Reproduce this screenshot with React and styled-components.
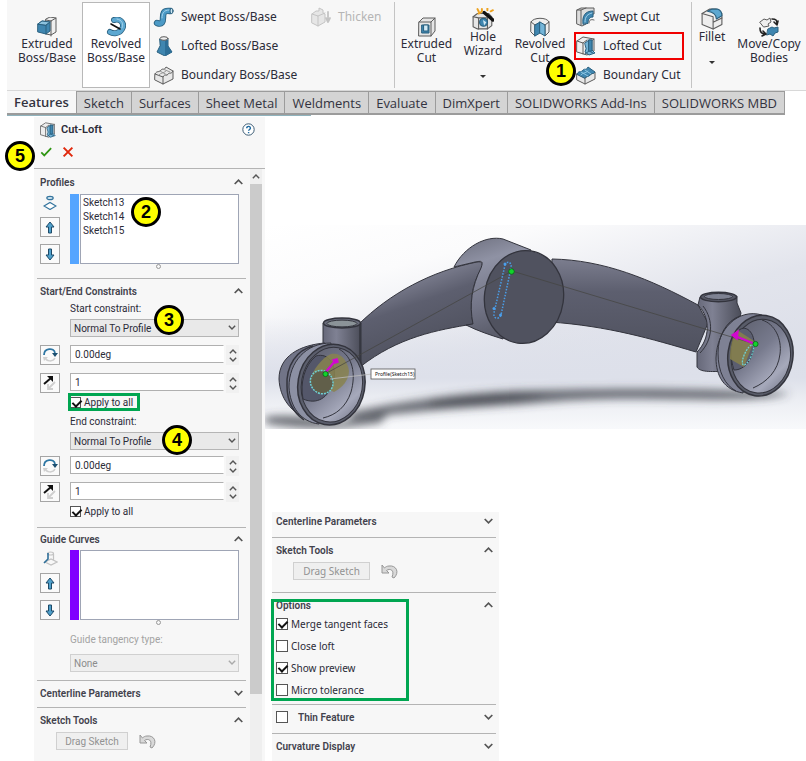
import React, { useId } from 'react';
import styled, { createGlobalStyle } from 'styled-components';

const theme = {
  ink: '#2b2b38',
  grey: '#a3a3a3',
  panel: '#f7f7f7',
  line: '#b4b4b4',
  blue: '#3f86b0',
  darkBlue: '#2a607f',
  green: '#00a651',
  danger: '#f00000',
};

const GlobalStyle = createGlobalStyle`
  * {
    box-sizing: border-box;
  }
  body {
    margin: 0;
    background: #fff;
    color: ${theme.ink};
    font-family: 'Noto Sans', 'Open Sans', sans-serif;
    font-size: 12px;
  }
  button, input, select {
    font: inherit;
    color: inherit;
  }
  h2, h3, ul {
    margin: 0;
    padding: 0;
  }
`;

const Page = styled.div`
  display: flex;
  flex-direction: column;
  min-height: 100vh;
`;

/* ---------- ribbon ---------- */

const Ribbon = styled.header`
  margin-left: 7px;
  &::after {
    content: '';
    display: block;
    width: 38%;
    height: 1px;
    background: #8fb3bd;
  }
`;
const Tools = styled.div`
  display: flex;
  height: 91px;
  padding: 2px 0 2px 5px;
  background: ${theme.panel};
  border-bottom: 1px solid #d8d8d8;
`;
const BigTool = styled.button`
  flex: none;
  width: ${({ $width }) => $width}px;
  display: flex;
  flex-direction: column;
  align-items: center;
  padding: ${({ $menu }) => ($menu ? 5 : 14)}px 0 0;
  border: 1px solid ${({ $active }) => ($active ? '#b8b8b8' : 'transparent')};
  background: ${({ $active }) => ($active ? '#fff' : 'none')};
  line-height: 14px;
  white-space: pre;
`;
const MenuArrow = styled.span`
  margin-top: 17px;
  border: 3px solid transparent;
  border-top-color: #333;
`;
const ToolColumn = styled.div`
  flex: none;
  display: flex;
  flex-direction: column;
  width: ${({ $width }) => $width}px;
  padding-left: 3px;
`;
const SmallTool = styled.button`
  flex: none;
  position: relative;
  display: flex;
  align-items: center;
  gap: 6px;
  height: 29px;
  padding: 0;
  border: 0;
  background: none;
  white-space: nowrap;
  svg {
    width: 22px;
  }
  &:disabled {
    color: #b5b5b5;
  }
`;
const ToolDivider = styled.span`
  flex: none;
  width: 1px;
  background: #c4c4c4;
`;
const RedFrame = styled.span`
  position: absolute;
  inset: 1px 7px 0 -1px;
  border: 2px solid ${theme.danger};
`;

const Tabs = styled.nav`
  display: flex;
  height: 24px;
`;
const Tab = styled.button`
  flex: none;
  padding: 0 7px;
  border: 1px solid #9b9b9b;
  border-width: ${({ $active }) => ($active ? '0 1px 2px 0' : '1px 1px 2px 0')};
  background: ${({ $active }) => ($active ? theme.panel : '#d4d4d4')};
  font-family: 'Open Sans', sans-serif;
  font-size: 13px;
  font-weight: ${({ $active }) => ($active ? 600 : 400)};
  color: #333340;
  white-space: nowrap;
`;

/* ---------- badges and frames ---------- */

const Badge = styled.span`
  position: absolute;
  z-index: 2;
  left: ${({ $x }) => $x}px;
  top: ${({ $y }) => $y}px;
  width: 30px;
  height: 30px;
  border: 3px solid #000;
  border-radius: 50%;
  background: #ff0;
  color: #000;
  font: bold 18px/24px 'Liberation Sans', Arial, sans-serif;
  text-align: center;
`;
const GreenFrame = styled.span`
  position: absolute;
  inset: ${({ $inset }) => $inset};
  border: 3px solid ${theme.green};
  pointer-events: none;
`;

/* ---------- property panels ---------- */

const Body = styled.main`
  flex: 1;
  display: flex;
  align-items: stretch;
  padding: 1px 0 0 34px;
`;
const Panel = styled.aside`
  flex: none;
  display: flex;
  flex-direction: column;
  width: 231px;
  background: ${theme.panel};
  font-family: Roboto, 'Noto Sans', sans-serif;
  font-size: 10px;
`;
const PanelHeader = styled.div`
  position: relative;
  height: 52px;
  padding: 4px 10px 0 6px;
  border-bottom: 1px solid ${theme.line};
`;
const PanelTitle = styled.div`
  display: flex;
  align-items: center;
  gap: 5px;
  height: 17px;
  h2 {
    flex: 1;
    font-size: 11px;
    font-weight: 600;
  }
`;
const Actions = styled.div`
  display: flex;
  align-items: center;
  gap: 10px;
  height: 28px;
`;
const IconButton = styled.button`
  display: flex;
  padding: 0;
  border: 0;
  background: none;
`;
const PanelContent = styled.div`
  flex: 1;
  display: flex;
`;
const Sections = styled.div`
  flex: 1;
  min-width: 0;
  padding: 1px 4px 0 3px;
`;
const Scrollbar = styled.div`
  flex: none;
  display: flex;
  flex-direction: column;
  width: 12px;
  margin-right: 3px;
  background: #efefef;
`;
const ScrollArrow = styled(IconButton)`
  height: 15px;
  align-items: center;
  justify-content: center;
`;
const ScrollThumb = styled.span`
  flex: 510;
  background: #cbcbcb;
`;
const ScrollRest = styled.span`
  flex: 67;
`;

const Section = styled.section`
  position: relative;
  padding: 0 3px ${({ $bottom }) => $bottom}px;
  border-bottom: 1px solid ${theme.line};
  &:last-child {
    border-bottom: 0;
  }
`;
const SectionTitle = styled.div`
  display: flex;
  align-items: center;
  height: ${({ $height = 24 }) => $height}px;
  h3 {
    flex: 1;
    font-family: Roboto, 'Noto Sans', sans-serif;
    font-size: 10px;
    font-weight: 600;
    color: #42424c;
  }
`;
const Field = styled.div`
  display: grid;
  grid-template-columns: 20px minmax(0, 1fr);
  column-gap: 10px;
  padding-right: 4px;
`;
const IconStack = styled.div`
  display: flex;
  flex-direction: column;
  align-items: center;
  justify-content: space-between;
`;
const SquareButton = styled.button`
  display: flex;
  align-items: center;
  justify-content: center;
  width: 20px;
  height: 20px;
  padding: 0;
  border: 1px solid #a5a5a5;
  background: #fafafa;
`;
const ListBox = styled.ul`
  height: 70px;
  margin-left: 10px;
  padding: 1px 2px;
  border: 1px solid #9fa5b5;
  box-shadow: -1px 0 0 ${theme.panel}, -10px 0 0 ${({ $color }) => $color};
  background: #fff;
  list-style: none;
  line-height: 14px;
`;
const Splitter = styled.span`
  display: block;
  width: 5px;
  height: 5px;
  margin: 0 auto;
  border: 1px solid #999;
  border-radius: 50%;
  transform: translateX(17px);
`;
const Rows = styled.div`
  display: flex;
  flex-direction: column;
  gap: ${({ $gap }) => $gap}px;
  margin-bottom: 8px;
  &:last-child {
    margin-bottom: 0;
  }
`;
const Indent = styled.div`
  position: relative;
  margin: ${({ $top = 0 }) => $top}px 4px 0 30px;
`;
const FieldLabel = styled.label`
  display: block;
  line-height: 12px;
  margin-bottom: ${({ $muted }) => ($muted ? 8 : 4)}px;
  color: ${({ $muted }) => ($muted ? theme.grey : theme.ink)};
`;
const SelectBox = styled.div`
  position: relative;
  svg {
    position: absolute;
    right: 3px;
    top: 6px;
    pointer-events: none;
  }
`;
const Select = styled.select`
  display: block;
  width: 100%;
  height: 18px;
  padding: 0 3px;
  appearance: none;
  border: 1px solid #b5b5b5;
  border-radius: 0;
  background: #e9e9e9;
  &:disabled {
    color: #8c8c8c;
    border-color: #d0d0d0;
    background: #efefef;
    opacity: 1;
  }
`;
const NumberField = styled.div`
  display: flex;
  gap: 2px;
`;
const NumberInput = styled.input`
  flex: 1;
  min-width: 0;
  height: 18px;
  padding: 0 4px;
  border: 1px solid #b0b0b0;
  border-right-color: #fff;
  border-radius: 0;
  background: #fff;
`;
const Spinner = styled.div`
  display: flex;
  flex-direction: column;
  align-items: center;
  justify-content: center;
  gap: 3px;
  width: 13px;
  height: 20px;
  background: #f1f1f1;
`;
const Check = styled.label`
  position: relative;
  display: flex;
  align-items: center;
  gap: 3px;
  width: fit-content;
  height: ${({ $height = 12 }) => $height}px;
  white-space: nowrap;
`;
const Box = styled.input.attrs({ type: 'checkbox' })`
  position: relative;
  flex: none;
  width: ${({ $size = 11 }) => $size}px;
  height: ${({ $size = 11 }) => $size}px;
  margin: 0;
  appearance: none;
  border: 1px solid #555;
  background: #fff;
  &:checked::after {
    content: '';
    position: absolute;
    left: 3px;
    top: 0;
    width: 4px;
    height: 7px;
    border: solid #111;
    border-width: 0 2px 2px 0;
    transform: rotate(45deg);
  }
`;
const ToolRow = styled.div`
  display: flex;
  align-items: center;
  gap: 11px;
  padding-left: ${({ $left }) => $left}px;
`;
const DragButton = styled.button`
  width: ${({ $width }) => $width}px;
  height: 18px;
  padding: 0;
  border: 1px solid #d0d0d0;
  background: #efefef;
  &:disabled {
    color: #929292;
  }
`;

const Workspace = styled.div`
  flex: 1;
  min-width: 0;
`;
const Viewport = styled.figure`
  margin: 108px 0 83px;
  svg {
    display: block;
    width: 100%;
  }
`;
const LowerPanel = styled.aside`
  width: 227px;
  margin-left: 7px;
  padding-right: 3px;
  background: ${theme.panel};
  font-size: 10px;
  ${Section} {
    padding-left: 4px;
  }
`;
const Checks = styled.div`
  display: flex;
  flex-direction: column;
  gap: 8px;
`;
const ThinFeature = styled(Check)`
  flex: 1;
  gap: 10px;
`;

/* ---------- icons ---------- */

const Icon = ({ size = 20, children }) => (
  <svg
    width={size}
    height={size}
    viewBox="0 0 20 20"
    fill="none"
    stroke="#5c5c5c"
    strokeLinejoin="round"
    strokeLinecap="round"
    aria-hidden="true"
  >
    {children}
  </svg>
);

const ExtrudedBoss = () => (
  <Icon>
    <path d="M9 2l4-2 6 1v14l-5 3-5-1z" fill="#eee" />
    <path d="M14 4l5-3M14 4v15M9 3l5 1" />
    <path d="M1 7l4-3 8 1v9l-4 3-8-2z" fill={theme.blue} stroke={theme.darkBlue} />
    <path d="M1 7l8 1v9M9 8l4-3" stroke={theme.darkBlue} />
    <path d="M1 7l4-3 8 1-4 3z" fill="#8cc2de" stroke={theme.darkBlue} />
  </Icon>
);
const RevolvedBoss = () => (
  <Icon>
    <path d="M8 3c7-2 11 4 8 9-3 5-9 5-12 3" stroke={theme.darkBlue} strokeWidth="6" />
    <path d="M8 3c7-2 11 4 8 9-3 5-9 5-12 3" stroke="#5da8d1" strokeWidth="4.400" />
    <path d="M11 2c5 1 7 5 5 9" stroke="#a5d3eb" />
    <path d="M5 7l9 5" stroke="#111" strokeWidth="1.600" />
  </Icon>
);
const SweptBoss = () => (
  <Icon>
    <path d="M3 16c5 2 6-1 6-5s0-8 7-7" stroke={theme.darkBlue} strokeWidth="6.400" />
    <path d="M3 16c5 2 6-1 6-5s0-8 7-7" stroke="#4c9ac6" strokeWidth="4.600" />
    <path d="M8 11c0-5 2-8 7-8" stroke="#a5d3eb" />
    <ellipse cx="17.500" cy="4" rx="1.500" ry="2.600" fill="#cde6f3" stroke={theme.darkBlue} />
  </Icon>
);
const LoftedBoss = () => (
  <Icon>
    <path d="M6 3h8v7l4 6-7 4-8-4 3-6z" fill={theme.blue} stroke={theme.darkBlue} />
    <path d="M11 4v16l7-4-4-6V3z" fill="#2d6f98" stroke="none" />
    <ellipse cx="10" cy="2.500" rx="4" ry="1.800" fill="#eee" />
  </Icon>
);
const BoundaryBoss = () => (
  <Icon>
    <path d="M1 9c2-4 4-1 6-4 2-2 3 1 5-3l7 4v8l-10 5-8-4z" fill="#e8e8e8" />
    <path d="M9 12v7M1 9l8 3c2-4 3 0 5-3 2-2 3 1 5-3" />
    <path d="M6 6l7 4M9 4l7 3M5 10c2-3 4-1 7-4" stroke="#999" />
  </Icon>
);
const ThickenIcon = () => (
  <Icon>
    <g stroke="#c4c4c4">
      <path d="M1 7l4-3h3V1l4 2v3l2 1v8l-7 4-6-3z" fill="#e6e6e6" />
      <path d="M1 7l6 2v10M7 9l7-3" />
      <path d="M17 5v9M15 11l2 4 2-4" strokeWidth="1.800" />
    </g>
  </Icon>
);
const ExtrudedCut = () => (
  <Icon>
    <path d="M2 5l4-4h12v13l-4 5H2z" fill="#e6e6e6" />
    <path d="M2 5h12v14M14 5l4-4" />
    <path d="M5 8h7v8H5z" fill={theme.blue} stroke={theme.darkBlue} />
    <path d="M7 8h4v6H7z" fill="#d3eaf5" stroke={theme.darkBlue} />
  </Icon>
);
const HoleWizard = () => (
  <Icon size={22}>
    <path d="M1 8l4-3h10l3 3v8l-4 3H5l-4-2z" fill="#e6e6e6" />
    <path d="M1 8l5 1h8v10M6 9v10" />
    <circle cx="10.500" cy="13" r="3.600" fill={theme.blue} stroke={theme.darkBlue} />
    <path d="M10 11l3 2-2 3" fill="#d3eaf5" stroke="none" />
    <path d="M11 4l8 7" stroke="#111" strokeWidth="3" />
    <path d="M5 1l1 2M9 1v2M14 0v2M17 3l2-1M6 5l2-1" stroke="#eda321" strokeWidth="1.800" />
  </Icon>
);
const RevolvedCut = () => (
  <Icon>
    <path d="M1 5c2-5 16-5 18 0v10l-4 4V8l-5-2-5 2v11l-4-4z" fill="#eee" />
    <path d="M5 8l5-3v11l-5 3z" fill={theme.blue} stroke={theme.darkBlue} />
    <path d="M10 5l5 3v11l-5-3z" fill="#75b5d8" stroke={theme.darkBlue} />
    <path d="M1 5l4 3M19 5l-4 3" />
  </Icon>
);
const SweptCut = () => (
  <Icon>
    <path d="M1 3l4-2h13v6h-3c-4 0-5 3-5 6v4l-4 2-5-2z" fill="#ddd" />
    <path d="M1 3h4v15M5 3l5-2" />
    <path d="M7 17C6 9 9 4 17 4v6c-4 0-5 3-5 6z" fill={theme.blue} stroke={theme.darkBlue} />
    <path d="M9 15c0-6 3-8 7-9" stroke="#a5d3eb" />
    <path d="M13 16c0-3 2-4 5-3" />
  </Icon>
);
const LoftedCut = ({ size }) => (
  <Icon size={size}>
    <path d="M1 5l6-4 11 2v12l-7 4-10-3z" fill="#eee" />
    <path d="M1 5l6 2v11M7 7l4-3M12 7l6-4" />
    <path d="M9 7l4-3h3v10l3 3-6 2-4-3 1-3z" fill="#75b5d8" stroke={theme.darkBlue} />
    <path d="M13 4v11l-4 3M13 15l4 2" stroke={theme.darkBlue} />
    <path d="M13 4h3v11h-3z" fill={theme.blue} stroke={theme.darkBlue} />
  </Icon>
);
const BoundaryCut = () => (
  <Icon>
    <path d="M1 9l8 4 10-6v7l-10 5-8-4z" fill="#e8e8e8" />
    <path d="M9 13v6" />
    <path d="M1 9c2-4 4-1 6-4 2-2 3 1 5-3l7 5c-2 3-3 0-5 3s-3 0-5 3z" fill={theme.blue} stroke={theme.darkBlue} />
    <path d="M5 7l7 4M9 5l6 4M5 10c2-3 4-1 7-4" stroke="#8cc6e3" />
  </Icon>
);
const FilletIcon = () => (
  <Icon size={22}>
    <path d="M1 5l7-4h6l5 4v10l-8 4-10-4z" fill="#eee" />
    <path d="M1 5l10 3v11M11 13l8-4" />
    <path d="M6 3l4-2h5c3 1 4 3 4 6l-5 3c0-4-2-6-8-7z" fill="#5da8d1" stroke={theme.darkBlue} />
  </Icon>
);
const MoveCopy = () => (
  <Icon>
    <path d="M1 5l4-3 3 1 3-2 1 4-3 2 1 2-5 1z" fill="#eee" />
    <path d="M9 12l4-2 2 1 4-1v5l-3 1-2 3-3-2-3 1z" fill={theme.blue} stroke={theme.darkBlue} />
    <path d="M13 2c4 0 5 1 5 5M15 5l3 3 1-4M1 11c0 5 2 6 5 6M4 14l3 3-4 2" stroke="#222" strokeWidth="1.600" />
  </Icon>
);
const Help = () => (
  <svg width="13" height="13" viewBox="0 0 13 13" aria-hidden="true">
    <circle cx="6.500" cy="6.500" r="5.700" fill="#fff" stroke="#3d5d75" />
    <path d="M4.700 5.300c0-2.600 3.700-2.400 3.700 0 0 1.200-1.800 1.300-1.800 2.500M6.600 9v1.300" fill="none" stroke="#1f6aa0" strokeWidth="1.400" />
  </svg>
);
const Accept = () => (
  <svg width="12" height="12" viewBox="0 0 14 12" aria-hidden="true">
    <path d="M1.500 6.500l3.500 3.500 8-8.500" fill="none" stroke="#2f9613" strokeWidth="2" />
  </svg>
);
const Cancel = () => (
  <svg width="12" height="12" viewBox="0 0 11 11" aria-hidden="true">
    <path d="M1.500 1.500l8 8M9.500 1.500l-8 8" stroke="#e0280c" strokeWidth="1.800" />
  </svg>
);
const Chevron = ({ down, width = 9, color = '#555' }) => (
  <svg width={width} height={width === 9 ? 6 : 5} viewBox="0 0 9 6" aria-hidden="true">
    <path
      d={down ? 'M.7 1l3.800 3.800L8.300 1' : 'M.7 5l3.800-3.800L8.300 5'}
      fill="none"
      stroke={color}
      strokeWidth="1.700"
    />
  </svg>
);
const ProfileIcon = () => (
  <svg width="14" height="16" viewBox="0 0 14 16" fill="none" stroke="#35759e" strokeWidth="1.200" aria-hidden="true">
    <ellipse cx="7" cy="4" rx="3.200" ry="1.700" fill="#cde3ef" />
    <path d="M1 12l6-3.500 6 3.500-6 3.500z" fill="#fff" />
  </svg>
);
const GuideIcon = () => (
  <svg width="16" height="16" viewBox="0 0 16 16" fill="none" stroke="#c2c2c2" strokeWidth="1.200" aria-hidden="true">
    <ellipse cx="8.500" cy="3.500" rx="3" ry="1.500" />
    <path d="M3 12l6-3 6 3-6 3zM11.500 4v6" />
    <path d="M6 3v6l-4 4" stroke="#2e6f99" strokeWidth="1.600" />
  </svg>
);
const Arrow = ({ down }) => (
  <svg width="10" height="13" viewBox="0 0 10 13" aria-hidden="true">
    <path
      d={down ? 'M3.500 1h3v6H9l-4 5-4-5h2.500z' : 'M3.500 12h3V6H9L5 1 1 6h2.500z'}
      fill="#4fa0cb"
      stroke="#1d4a68"
      strokeLinejoin="round"
    />
  </svg>
);
const AngleIcon = () => (
  <svg width="16" height="16" viewBox="0 0 16 16" fill="none" aria-hidden="true">
    <path d="M2 8c0-7 10-8 11-2" stroke="#2e76a3" strokeWidth="1.800" />
    <path d="M10 6h6l-3 4z" fill="#1c4f70" />
    <path d="M3 10c1 5 8 5 10 1" stroke="#cfcfcf" strokeWidth="1.500" />
    <path d="M1 10h5l-4 4z" fill="#cfcfcf" />
  </svg>
);
const FlipIcon = () => (
  <svg width="16" height="16" viewBox="0 0 16 16" fill="none" aria-hidden="true">
    <path d="M2 9l7-6" stroke="#111" strokeWidth="2" />
    <path d="M5 1h6v6z" fill="#111" />
    <path d="M13 7l-6 6M6 9v5h5" stroke="#cfcfcf" strokeWidth="1.800" />
  </svg>
);
const Undo = () => (
  <svg width="17" height="15" viewBox="0 0 17 15" aria-hidden="true">
    <path
      d="M1 1v8h7L5.500 6.500C9 4 14 6 11 13l2 1c6-6 2-13-5-12-2 0-3.500 1-4.500 2z"
      fill="#d9d9d9"
      stroke="#979797"
      strokeLinejoin="round"
    />
  </svg>
);

/* ---------- 3D model ---------- */

const Model = () => (
  <svg viewBox="265 225 541 204" role="img" aria-label="Suspension arm with loft profiles">
    <defs>
      <linearGradient id="sky" x1="0" y1="0" x2=".7" y2="1">
        <stop offset="0" stopColor="#fff" />
        <stop offset=".25" stopColor="#fbfbfc" />
        <stop offset=".6" stopColor="#e2e4ec" />
        <stop offset="1" stopColor="#dadde8" />
      </linearGradient>
      <linearGradient id="floor" x1="0" y1="0" x2="0" y2="1">
        <stop offset=".45" stopColor="#dde0ea" stopOpacity="0" />
        <stop offset=".75" stopColor="#dde0ea" />
        <stop offset=".86" stopColor="#eceef3" />
        <stop offset="1" stopColor="#f8f9fb" />
      </linearGradient>
      <linearGradient id="arm" x1="0" y1="0" x2="0" y2="1">
        <stop offset="0" stopColor="#7b7d8e" />
        <stop offset=".35" stopColor="#5d5f6f" />
        <stop offset="1" stopColor="#50525f" />
      </linearGradient>
      <linearGradient id="armLeft" x1=".35" y1=".2" x2=".6" y2=".8">
        <stop offset="0" stopColor="#7b7d8e" />
        <stop offset=".35" stopColor="#5d5f6f" />
        <stop offset="1" stopColor="#50525f" />
      </linearGradient>
      <linearGradient id="hub" x1="0" y1="0" x2=".25" y2="1">
        <stop offset="0" stopColor="#6c6e7d" />
        <stop offset=".3" stopColor="#8f92a4" />
        <stop offset=".7" stopColor="#747688" />
        <stop offset="1" stopColor="#5c5e6c" />
      </linearGradient>
      <linearGradient id="tube">
        <stop offset="0" stopColor="#666879" />
        <stop offset=".35" stopColor="#7f8193" />
        <stop offset="1" stopColor="#4b4d59" />
      </linearGradient>
      <linearGradient id="inside" x1="0" y1="0" x2="1" y2="1">
        <stop offset="0" stopColor="#5b5d6b" />
        <stop offset=".45" stopColor="#777a8d" />
        <stop offset=".75" stopColor="#a6a9bb" />
        <stop offset="1" stopColor="#6c6f80" />
      </linearGradient>
      <filter id="soft" x="-20%" y="-100%" width="140%" height="300%">
        <feGaussianBlur stdDeviation="4" />
      </filter>
    </defs>
    <rect x="265" y="225" width="541" height="204" fill="url(#sky)" />
    <rect x="265" y="225" width="541" height="204" fill="url(#floor)" />

    {/* ground shadow */}
    <g filter="url(#soft)" fill="#3f4149">
      <path d="M350 412c60-12 120-21 190-22 90-2 160-2 250 3-20 8-70 7-130 6-90-2-120 5-180 8-50 3-90 8-130 11z" opacity=".75" />
      <path d="M430 400c40-6 80-8 120-5-30 7-70 10-120 12z" opacity=".6" />
      <path d="M265 417c20-3 50 0 75 5 15-4 35-8 50-11l-10 12-40 5c-30 1-60-1-75-5z" opacity=".75" />
    </g>

    <g stroke="#33343d" strokeWidth="1" strokeLinejoin="round">
      {/* left arm and tube */}
      <path d="M358 325C390 293 432 271 477 262c6-1 6 2 4 7-9 15-12 34-8 55-36 6-75 13-113 43z" fill="url(#armLeft)" />
      <path d="M323 323v40h38v-40z" fill="url(#tube)" />
      <path d="M360 323v45" strokeWidth="1.500" />
      <ellipse cx="342" cy="323" rx="18.500" ry="5" fill="#6a6d7c" strokeWidth="1.500" />
      <ellipse cx="342" cy="323.500" rx="15" ry="3.400" fill="#8b9398" />

      {/* right arm */}
      <path d="M552 259c52 1 98 20 146 46l10 18-12 29c-44-13-88-26-146-30z" fill="url(#arm)" />

      {/* hub */}
      <path d="M454 267c10-20 32-32 49-28l28 11-28 89c-13-4-25-8-37-14l7-1c-4-20-1-38 8-56 3-8 0-7-6-6z" fill="url(#hub)" />
      <ellipse cx="524" cy="297" rx="39.500" ry="46.500" transform="rotate(8 524 297)" fill="#50525f" strokeWidth="1.300" />

      {/* right tube */}
      <path d="M700 297l-2 8c13 13 12 34-1 47v15c3 5 12 5 30 4l14-58-4-10v-7z" fill="url(#tube)" />
      <path d="M703 306c11 14 10 34-3 47" fill="none" />
      <ellipse cx="718.500" cy="297" rx="18" ry="4.800" fill="#565865" strokeWidth="1.500" />
      <ellipse cx="718.500" cy="296.500" rx="14" ry="3" fill="#7e8292" />
    </g>

    {/* left ring */}
    <g stroke="#33343d">
      <path d="M325 343c-25 2-46 13-46 36 1 20 12 33 31 42z" fill="#717487" />
      <path d="M331 343c-25 0-42 19-42 44 1 20 12 35 30 37z" fill="#8c90a3" />
      <path d="M313 346c-16 4-27 19-26 40 0 17 7 27 17 34" fill="none" strokeWidth="1.500" />
      <ellipse cx="331.500" cy="384.500" rx="33.500" ry="40.500" transform="rotate(10 331 384)" fill="#5b5e6c" strokeWidth="1.500" />
      <ellipse cx="332" cy="384.500" rx="30.500" ry="37.500" transform="rotate(10 331 384)" fill="url(#inside)" />
      <path d="M316 356c13-4 22 10 17 27-5 15-16 22-30 16-3-16 1-33 13-43z" fill="#54576a" />
      <path d="M339 349c14 8 17 25 12 43-5 15-15 23-28 26" fill="none" />
    </g>
    <path d="M331 354c9-2 16 5 18 17 0 9-7 17-15 21l-24-11c2-11 12-23 21-27z" fill="#88834f" opacity=".85" />
    <ellipse cx="321.500" cy="382.500" rx="11" ry="12" transform="rotate(-35 321 382)" fill="#615f4a" stroke="#6ed0d5" strokeWidth="1.500" strokeDasharray="2 1" />
    <path d="M330 379l42-5" stroke="#bbb" strokeWidth=".8" />

    {/* right ring */}
    <g stroke="#33343d">
      <path d="M762 315c-24-7-45 14-46 43 0 18 8 32 27 35z" fill="#7e8194" />
      <path d="M740 316c-14 5-22 20-22 37 0 19 7 32 18 38" fill="none" />
      <ellipse cx="760.500" cy="355.500" rx="32.500" ry="40.500" transform="rotate(8 760 355)" fill="#595c69" strokeWidth="1.500" />
      <ellipse cx="761" cy="356" rx="29.500" ry="37" transform="rotate(8 760 355)" fill="url(#inside)" />
      <path d="M735 335c8-14 20-4 19 10-1 14-9 25-20 25-4-12-4-24 1-35z" fill="#5b5e70" />
      <path d="M762 320c13 4 20 19 18 34-2 17-13 28-27 34" fill="none" />
    </g>
    <path d="M737 330l17 11-10 26-14-8c0-11 2-21 7-29z" fill="#85804d" opacity=".9" />
    <ellipse cx="748" cy="355" rx="3.500" ry="11" transform="rotate(25 748 355)" fill="none" stroke="#6ed0d5" strokeWidth="1.300" strokeDasharray="2 1" />

    {/* centre line and sketch profile */}
    <path d="M325 374l187-103 243 73" fill="none" stroke="#44443f" strokeWidth=".7" />
    <path d="M505 265c2-5 7-3 6 3l-10 47c-2 5-8 4-7-2z" fill="none" stroke="#4a9ee8" strokeWidth="1.500" strokeDasharray="1.500 1.500" />
    <g fill="#4aa0ee">
      <circle cx="505" cy="264" r="1.500" />
      <circle cx="494" cy="308.500" r="1.500" />
      <circle cx="500.500" cy="315" r="1.500" />
    </g>

    <g stroke="#d108cf" strokeWidth="2.300" fill="#d108cf">
      <path d="M325 373l10-12M755 344l-20-8" />
      <path d="M333 360l4-1 1 3-3 1zM738 331l-6 4 5 4z" strokeWidth="1.500" />
    </g>
    <g fill="#12d32b" stroke="#0a6516" strokeWidth=".8">
      <circle cx="325.500" cy="374" r="2.600" />
      <circle cx="511.500" cy="271.500" r="2.800" />
      <circle cx="755.500" cy="344" r="2.600" />
    </g>

    <rect x="371" y="369" width="44" height="10" fill="#fff" stroke="#555" strokeWidth=".8" />
    <text x="375" y="376" fontSize="5" fontFamily="'Noto Sans', sans-serif" fill="#111">
      Profile(Sketch15)
    </text>
  </svg>
);

/* ---------- composed parts ---------- */

const Tool = ({ icon, label, menu, active, width }) => (
  <BigTool $width={width} $menu={menu} $active={active}>
    {icon}
    {label}
    {menu && <MenuArrow />}
  </BigTool>
);

const Header = ({ title, down, height }) => (
  <SectionTitle $height={height}>
    <h3>{title}</h3>
    <IconButton aria-label={`Toggle ${title}`}>
      <Chevron down={down} />
    </IconButton>
  </SectionTitle>
);

const DropDown = ({ id, value, disabled }) => (
  <SelectBox>
    <Select id={id} disabled={disabled}>
      <option>{value}</option>
    </Select>
    <Chevron down width={8} color={disabled ? '#aaa' : '#555'} />
  </SelectBox>
);

const Selection = ({ icon, label, color, items = [] }) => (
  <>
    <Field>
      <IconStack>
        {icon}
        <SquareButton aria-label="Move up">
          <Arrow />
        </SquareButton>
        <SquareButton aria-label="Move down">
          <Arrow down />
        </SquareButton>
      </IconStack>
      <ListBox $color={color} aria-label={label}>
        {items.map(item => (
          <li key={item}>{item}</li>
        ))}
      </ListBox>
    </Field>
    <Splitter />
  </>
);

const NumberRow = ({ icon, label, value }) => (
  <Field>
    <SquareButton aria-label={`Reverse ${label}`}>{icon}</SquareButton>
    <NumberField>
      <NumberInput aria-label={label} defaultValue={value} />
      <Spinner>
        <IconButton aria-label={`Increase ${label}`}>
          <Chevron width={8} />
        </IconButton>
        <IconButton aria-label={`Decrease ${label}`}>
          <Chevron down width={8} />
        </IconButton>
      </Spinner>
    </NumberField>
  </Field>
);

const Constraint = ({ label, gap, badge, framed }) => {
  const id = useId();
  return (
    <Rows $gap={gap}>
      <Indent>
        <FieldLabel htmlFor={id}>{label}</FieldLabel>
        <DropDown id={id} value="Normal To Profile" />
        {badge}
      </Indent>
      <NumberRow icon={<AngleIcon />} label="angle" value="0.00deg" />
      <div>
        <NumberRow icon={<FlipIcon />} label="length" value="1" />
        <Indent $top={3}>
          <Check>
            <Box defaultChecked />
            Apply to all
            {framed && <GreenFrame $inset="-3px -7px -3px -2px" />}
          </Check>
        </Indent>
      </div>
    </Rows>
  );
};

const SketchTools = ({ left, width }) => (
  <ToolRow $left={left}>
    <DragButton $width={width} disabled>
      Drag Sketch
    </DragButton>
    <IconButton aria-label="Undo" disabled>
      <Undo />
    </IconButton>
  </ToolRow>
);

const tabs = [
  'Features',
  'Sketch',
  'Surfaces',
  'Sheet Metal',
  'Weldments',
  'Evaluate',
  'DimXpert',
  'SOLIDWORKS Add-Ins',
  'SOLIDWORKS MBD',
];

const options = [
  ['Merge tangent faces', true],
  ['Close loft', false],
  ['Show preview', true],
  ['Micro tolerance', false],
];

export default () => {
  return (
    <Page>
      <GlobalStyle />
      <Ribbon>
        <Tools>
          <Tool width={70} icon={<ExtrudedBoss />} label={'Extruded\nBoss/Base'} />
          <Tool width={68} icon={<RevolvedBoss />} label={'Revolved\nBoss/Base'} active />
          <ToolColumn $width={157}>
            <SmallTool><SweptBoss />Swept Boss/Base</SmallTool>
            <SmallTool><LoftedBoss />Lofted Boss/Base</SmallTool>
            <SmallTool><BoundaryBoss />Boundary Boss/Base</SmallTool>
          </ToolColumn>
          <ToolColumn $width={87}>
            <SmallTool disabled><ThickenIcon />Thicken</SmallTool>
          </ToolColumn>
          <ToolDivider />
          <Tool width={63} icon={<ExtrudedCut />} label={'Extruded\nCut'} />
          <Tool width={50} icon={<HoleWizard />} label={'Hole\nWizard'} menu />
          <Tool width={64} icon={<RevolvedCut />} label={'Revolved\nCut'} />
          <ToolColumn $width={119}>
            <SmallTool><SweptCut />Swept Cut</SmallTool>
            <SmallTool><LoftedCut />Lofted Cut<RedFrame /></SmallTool>
            <SmallTool>
              <BoundaryCut />Boundary Cut
              <Badge $x={-29} $y={-4}>1</Badge>
            </SmallTool>
          </ToolColumn>
          <ToolDivider />
          <Tool width={40} icon={<FilletIcon />} label="Fillet" menu />
          <Tool width={74} icon={<MoveCopy />} label={'Move/Copy\nBodies'} />
        </Tools>
        <Tabs>
          {tabs.map((tab, i) => (
            <Tab key={tab} $active={i === 0}>{tab}</Tab>
          ))}
        </Tabs>
      </Ribbon>

      <Body>
        <Panel>
          <PanelHeader>
            <PanelTitle>
              <LoftedCut size={16} />
              <h2>Cut-Loft</h2>
              <IconButton aria-label="Help"><Help /></IconButton>
            </PanelTitle>
            <Actions>
              <IconButton aria-label="OK"><Accept /></IconButton>
              <IconButton aria-label="Cancel"><Cancel /></IconButton>
            </Actions>
            <Badge $x={-29} $y={24}>5</Badge>
          </PanelHeader>
          <PanelContent>
            <Sections>
              <Section $bottom={9}>
                <Header title="Profiles" />
                <Selection
                  icon={<ProfileIcon />}
                  label="Profiles"
                  color="#55a5ff"
                  items={['Sketch13', 'Sketch14', 'Sketch15']}
                />
                <Badge $x={94} $y={27}>2</Badge>
              </Section>
              <Section $bottom={10}>
                <Header title="Start/End Constraints" />
                <Constraint
                  label="Start constraint:"
                  gap={8}
                  framed
                  badge={<Badge $x={84} $y={2}>3</Badge>}
                />
                <Constraint
                  label="End constraint:"
                  gap={6}
                  badge={<Badge $x={92} $y={9}>4</Badge>}
                />
              </Section>
              <Section $bottom={8}>
                <Header title="Guide Curves" height={22} />
                <Selection icon={<GuideIcon />} label="Guide Curves" color="#8000ff" />
                <Indent $top={9}>
                  <FieldLabel htmlFor="tangency" $muted>Guide tangency type:</FieldLabel>
                  <DropDown id="tangency" value="None" disabled />
                </Indent>
              </Section>
              <Section $bottom={2}>
                <Header title="Centerline Parameters" down />
              </Section>
              <Section $bottom={10}>
                <Header title="Sketch Tools" />
                <SketchTools left={16} width={72} />
              </Section>
            </Sections>
            <Scrollbar>
              <ScrollArrow aria-label="Scroll up"><Chevron width={8} /></ScrollArrow>
              <ScrollThumb />
              <ScrollRest />
            </Scrollbar>
          </PanelContent>
        </Panel>

        <Workspace>
          <Viewport>
            <Model />
          </Viewport>
          <LowerPanel>
            <Section $bottom={7}>
              <Header title="Centerline Parameters" down height={18} />
            </Section>
            <Section $bottom={12}>
              <Header title="Sketch Tools" />
              <SketchTools left={17} width={77} />
            </Section>
            <Section $bottom={7}>
              <Header title="Options" />
              <Checks>
                {options.map(([name, on]) => (
                  <Check key={name} $height={14}>
                    <Box $size={12} defaultChecked={on} />
                    {name}
                  </Check>
                ))}
              </Checks>
              <GreenFrame $inset="6px 87px 3px -1px" />
            </Section>
            <Section $bottom={4}>
              <SectionTitle>
                <ThinFeature>
                  <Box $size={12} />
                  <h3>Thin Feature</h3>
                </ThinFeature>
                <IconButton aria-label="Toggle Thin Feature"><Chevron down /></IconButton>
              </SectionTitle>
            </Section>
            <Section $bottom={3}>
              <Header title="Curvature Display" down />
            </Section>
          </LowerPanel>
        </Workspace>
      </Body>
    </Page>
  );
};
